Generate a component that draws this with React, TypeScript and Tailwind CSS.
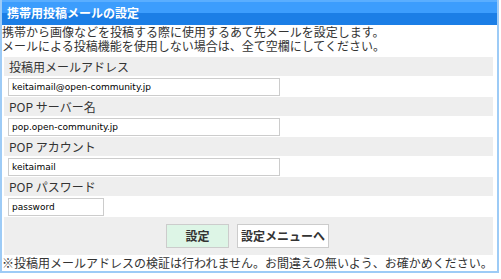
import React from "react";

const jp = "font-['Noto_Sans_CJK_JP','Noto_Sans_CJK_SC',sans-serif]";
const inputFont = "font-['DejaVu_Sans',sans-serif]";

function LabelRow({ label }: { label: string }) {
  return (
    <div className="h-[19px] bg-[#eeeeee] pl-[5px] leading-[19px] text-[12px] text-[#333]">
      {label}
    </div>
  );
}

function InputRow({ value, width }: { value: string; width: string }) {
  return (
    <div className="flex h-[21px] items-center bg-white pl-[4px]">
      <input
        readOnly
        defaultValue={value}
        className={`${inputFont} ${width} h-[18px] border border-[#cccccc] bg-white px-[3px] text-[9px] text-black outline-none`}
      />
    </div>
  );
}

export default function App() {
  return (
    <div className={`${jp} w-[499px] border-2 border-t-0 border-[#9dcbf6] bg-white text-[#333]`}>
      <div className="h-[25px] border-t-2 border-[#5aaeff] bg-[linear-gradient(to_bottom,#3c9dfd_0%,#3c9dfd_50%,#1b7ee6_50%,#1b7ee6_100%)] pl-[5px] text-[12px] font-bold leading-[22px] text-white">
        携帯用投稿メールの設定
      </div>
      <div className="pb-[4px] pl-0 text-[12px] leading-[14px] text-[#333]">
        <div>携帯から画像などを投稿する際に使用するあて先メールを設定します。</div>
        <div>メールによる投稿機能を使用しない場合は、全て空欄にしてください。</div>
      </div>
      <div className="ml-[2px] w-[489px]">
        <LabelRow label="投稿用メールアドレス" />
        <InputRow value="keitaimail@open-community.jp" width="w-[272px]" />
        <LabelRow label="POP サーバー名" />
        <InputRow value="pop.open-community.jp" width="w-[272px]" />
        <LabelRow label="POP アカウント" />
        <InputRow value="keitaimail" width="w-[272px]" />
        <LabelRow label="POP パスワード" />
        <InputRow value="password" width="w-[96px]" />
        <div className="flex h-[38px] items-center justify-center gap-[8px] bg-[#eeeeee] pr-[2px]">
          <button className="h-[24px] w-[63px] border border-[#cccccc] bg-[#ddf5e6] text-[12px] font-bold text-[#333]">
            設定
          </button>
          <button className="h-[24px] w-[92px] border border-[#cccccc] bg-white text-[12px] font-bold text-[#333]">
            設定メニューへ
          </button>
        </div>
      </div>
      <div className="text-[12px] leading-[16px] text-[#333]">
        ※投稿用メールアドレスの検証は行われません。お間違えの無いよう、お確かめください。
      </div>
    </div>
  );
}
